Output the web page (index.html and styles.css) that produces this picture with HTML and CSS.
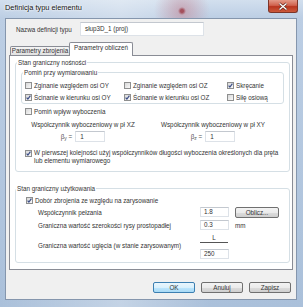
FILE: index.html
```html
<!DOCTYPE html>
<html lang="pl">
<head>
  <meta charset="UTF-8" />
  <title>Definicja typu elementu</title>
  <link rel="stylesheet" href="styles.css">
</head>
<body>
  <div class="window">
    <div class="titlebar">
      <span class="title">Definicja typu elementu</span>
      <span class="close">
        <svg width="28" height="11" viewBox="0 0 28 11">
          <path d="M10.5 2.5 L17.5 8.5 M17.5 2.5 L10.5 8.5" stroke="#5a2018" stroke-width="2.6" />
          <path d="M10.5 2.5 L17.5 8.5 M17.5 2.5 L10.5 8.5" stroke="#fff" stroke-width="1.4" />
        </svg>
      </span>
    </div>

    <div class="client">
      <div class="name-row">
        <span class="name-label">Nazwa definicji typu</span>
        <span class="field name-field">słup3D_1 (proj)</span>
      </div>

      <div class="tabs">
        <span class="tab">Parametry zbrojenia</span>
        <span class="tab active">Parametry obliczeń</span>
      </div>

      <div class="panel">
        <div class="group g-ult">
          <span class="group-title">Stan graniczny nośności</span>
          <div class="group g-skip">
            <span class="group-title">Pomiń przy wymiarowaniu</span>
            <div class="check-grid">
              <label class="check"><span class="box"></span>Zginanie względem osi OY</label>
              <label class="check"><span class="box"></span>Zginanie względem osi OZ</label>
              <label class="check"><span class="box on"><svg width="5" height="5" viewBox="0 0 5 5"><path d="M0.6 2.6 L1.9 4 L4.4 0.7" /></svg></span>Skręcanie</label>
              <label class="check"><span class="box on"><svg width="5" height="5" viewBox="0 0 5 5"><path d="M0.6 2.6 L1.9 4 L4.4 0.7" /></svg></span>Ścinanie w kierunku osi OY</label>
              <label class="check"><span class="box on"><svg width="5" height="5" viewBox="0 0 5 5"><path d="M0.6 2.6 L1.9 4 L4.4 0.7" /></svg></span>Ścinanie w kierunku osi OZ</label>
              <label class="check"><span class="box"></span>Siłę osiową</label>
            </div>
          </div>

          <label class="check row-buckling"><span class="box"></span>Pomiń wpływ wyboczenia</label>

          <div class="coef-grid">
            <div class="coef">
              <div class="coef-label">Współczynnik wyboczeniowy w pł XZ</div>
              <div class="coef-input"><span class="beta">β<sub>y</sub> =</span><span class="field">1</span></div>
            </div>
            <div class="coef">
              <div class="coef-label">Współczynnik wyboczeniowy w pł XY</div>
              <div class="coef-input"><span class="beta">β<sub>z</sub> =</span><span class="field">1</span></div>
            </div>
          </div>

          <label class="check multi"><span class="box on"><svg width="5" height="5" viewBox="0 0 5 5"><path d="M0.6 2.6 L1.9 4 L4.4 0.7" /></svg></span><span>W pierwszej kolejności użyj współczynników długości wyboczenia określonych dla pręta<br>lub elementu wymiarowego</span></label>
        </div>

        <div class="group g-sls">
          <span class="group-title">Stan graniczny użytkowania</span>
          <label class="check row-crack"><span class="box on"><svg width="5" height="5" viewBox="0 0 5 5"><path d="M0.6 2.6 L1.9 4 L4.4 0.7" /></svg></span>Dobór zbrojenia ze względu na zarysowanie</label>

          <div class="form-grid">
            <span>Współczynnik pełzania</span>
            <span class="field small">1.8</span>
            <span class="btn calc">Oblicz...</span>

            <span>Graniczna wartość szerokości rysy prostopadłej</span>
            <span class="field small">0.3</span>
            <span class="unit">mm</span>

            <span>Graniczna wartość ugięcia (w stanie zarysowanym)</span>
            <span class="frac-box">
              <span class="frac">L</span>
              <span class="field small">250</span>
            </span>
            <span></span>
          </div>
        </div>
      </div>

      <div class="buttons">
        <span class="btn default">OK</span>
        <span class="btn">Anuluj</span>
        <span class="btn">Zapisz</span>
      </div>
    </div>
  </div>
</body>
</html>
```

FILE: styles.css
```css
* {
  box-sizing: border-box;
}
body {
  margin: 0;
  width: 303px;
  height: 307px;
  overflow: hidden;
  font-family: 'Liberation Sans', Arial, sans-serif;
  font-size: 6.3px;
  color: #333;
}
.window {
  width: 303px;
  height: 307px;
  display: flex;
  flex-direction: column;
  background:
    radial-gradient(circle at 182px 11px, #a4505c 0, #a4505c 1.5px, rgba(190,120,135,0.45) 4px, rgba(200,170,185,0) 28px),
    linear-gradient(to right, rgba(255,255,255,0) 0, rgba(255,255,255,0.3) 40%, rgba(255,255,255,0) 70%),
    linear-gradient(to bottom, #d2dfee 0, #bccee4 18px, #aac0da 100%);
}
.titlebar {
  height: 18px;
  flex: none;
  display: flex;
  justify-content: space-between;
  align-items: flex-start;
  padding: 0 5px;
}
.title {
  font-size: 7.4px;
  line-height: 16px;
  color: #111;
  text-shadow: 0 0 3px #fff, 0 0 2px #fff;
}
.close {
  width: 30px;
  height: 13px;
  border: 1px solid #7d3528;
  border-top: none;
  border-radius: 0 0 3px 3px;
  background: linear-gradient(to bottom, #e39a89 0, #d0624e 45%, #b9351f 55%, #cc5a3c 100%);
  display: flex;
  justify-content: center;
  align-items: center;
}
.close svg path {
  fill: none;
}

/* client area */
.client {
  margin: 0 6px 0 5px;
  height: 282px;
  background: #f0f0f0;
  border: 1px solid #8596ad;
}
.field {
  display: block;
  background: #fff;
  border: 1px solid #dde2e8;
  border-top-color: #c3c8cf;
  padding-left: 4px;
  text-align: left;
}
.name-row {
  display: flex;
  align-items: center;
  height: 14px;
  margin-top: 3px;
  padding-left: 10px;
}
.name-label {
  width: 64px;
}
.name-field {
  width: 124px;
  height: 14px;
  line-height: 12px;
}

/* tabs */
.tabs {
  display: flex;
  align-items: flex-end;
  height: 13px;
  margin-top: 6px;
  padding-left: 4px;
  position: relative;
  z-index: 1;
}
.tab {
  width: 60px;
  height: 9px;
  line-height: 7px;
  text-align: center;
  border: 1px solid #898c95;
  border-bottom: none;
  border-radius: 2px 2px 0 0;
  background: linear-gradient(to bottom, #f4f4f4, #e1e1e1);
}
.tab.active {
  width: 64px;
  height: 14px;
  line-height: 10px;
  margin: 0 0 -1px -1px;
  background: #fff;
}
.panel {
  width: 284px;
  height: 215px;
  margin-left: 3px;
  background: #fff;
  border: 1px solid #898c95;
  padding: 6px 0 0 5px;
}

/* group boxes */
.group {
  border: 1px solid #d5dfe5;
  border-radius: 3px;
}
.group-title {
  display: block;
  width: max-content;
  height: 9px;
  line-height: 9px;
  margin: -5px 0 0 1px;
  padding: 0 1px;
  background: #fff;
}
.g-ult {
  width: 275px;
  height: 110px;
}
.g-skip {
  width: 263px;
  margin: 5px 0 0 5px;
}
.check-grid {
  display: grid;
  grid-template-columns: 99px 103px auto;
  grid-auto-rows: 12px;
  margin-top: 2px;
  padding-left: 3px;
}
.check {
  display: flex;
  align-items: center;
  gap: 2px;
}
.box {
  flex: none;
  width: 7px;
  height: 7px;
  border: 1px solid #8e8f8f;
  background: linear-gradient(135deg, #d8d8d8, #f9f9f9);
  display: flex;
  align-items: center;
  justify-content: center;
}
.box path {
  fill: none;
  stroke: #3b4d86;
  stroke-width: 1.2;
}
.row-buckling {
  height: 12px;
  margin-top: 1px;
  padding-left: 9px;
}
.coef-grid {
  display: grid;
  grid-template-columns: 134px 126px;
  text-align: center;
  margin-top: 2px;
}
.coef-label {
  line-height: 11px;
}
.coef-input {
  display: flex;
  justify-content: center;
  align-items: center;
  gap: 3px;
  height: 11px;
  margin-top: 1px;
}
.coef-input .field {
  width: 30px;
  height: 11px;
  line-height: 9px;
}
.beta {
  color: #555;
}
.beta sub {
  font-size: 5px;
  vertical-align: -1px;
}
.check.multi {
  align-items: flex-start;
  line-height: 8px;
  margin-top: 7px;
  padding-left: 9px;
}
.check.multi .box {
  margin-top: 1px;
}

.g-sls {
  width: 275px;
  height: 75px;
  margin-top: 16px;
}
.g-sls .group-title {
  margin-left: 0;
}
.row-crack {
  height: 11px;
  margin-top: 2px;
  padding-left: 10px;
}
.form-grid {
  display: grid;
  grid-template-columns: 156px 29px auto;
  grid-template-rows: 12px 12px auto;
  column-gap: 6px;
  row-gap: 1px;
  align-items: center;
  padding-left: 22px;
}
.field.small {
  width: 29px;
  height: 10px;
  line-height: 8px;
  padding-left: 3px;
}
.frac-box {
  display: flex;
  flex-direction: column;
}
.frac {
  width: 28px;
  line-height: 8px;
  margin-top: 2px;
  margin-bottom: 6px;
  text-align: center;
  border-bottom: 1px solid #555;
}
.unit {
  color: #333;
}

/* buttons */
.btn {
  display: block;
  width: 42px;
  height: 11px;
  line-height: 9px;
  text-align: center;
  border: 1px solid #707070;
  border-radius: 2px;
  background: linear-gradient(to bottom, #f3f3f3 0, #ebebeb 50%, #dddddd 51%, #cfcfcf 100%);
}
.btn.calc {
  width: 44px;
}
.btn.default {
  border-color: #3c7fb1;
  background: linear-gradient(to bottom, #eaf6fd 0, #d9f0fc 50%, #bee6fd 51%, #a7d9f5 100%);
}
.buttons {
  display: flex;
  justify-content: flex-end;
  gap: 6px;
  margin-top: 12px;
  padding-right: 5px;
}
```
